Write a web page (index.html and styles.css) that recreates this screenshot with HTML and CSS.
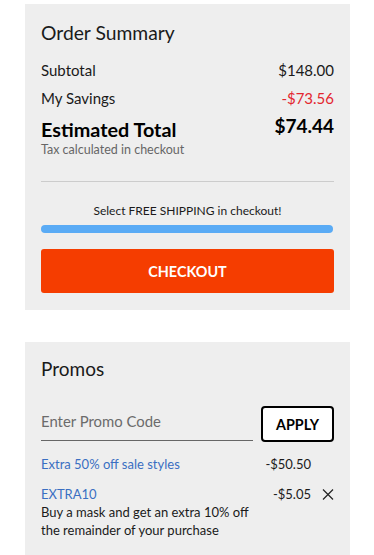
FILE: index.html
```html
<!DOCTYPE html>
<html>
<head>
<meta charset="utf-8">
<link rel="stylesheet" href="styles.css">
</head>
<body>
<div class="page">
  <section class="card summary">
    <h2 class="title">Order Summary</h2>
    <div class="row sub"><span>Subtotal</span><span>$148.00</span></div>
    <div class="row sav"><span>My Savings</span><span class="red">-$73.56</span></div>
    <div class="row total"><span>Estimated Total</span><span>$74.44</span></div>
    <div class="tax">Tax calculated in checkout</div>
    <hr class="divider">
    <div class="ship">Select FREE SHIPPING in checkout!</div>
    <div class="bar"></div>
    <button class="checkout">CHECKOUT</button>
  </section>
  <section class="card promos">
    <h2 class="title ptitle">Promos</h2>
    <div class="promo-form">
      <input class="code" type="text" placeholder="Enter Promo Code">
      <button class="apply">APPLY</button>
    </div>
    <div class="promo p1">
      <span class="pname">Extra 50% off sale styles</span>
      <span class="pamt">-$50.50</span>
      <span class="px"></span>
    </div>
    <div class="promo p2">
      <div class="pinfo">
        <span class="pname">EXTRA10</span>
        <span class="pdesc">Buy a mask and get an extra 10% off the remainder of your purchase</span>
      </div>
      <span class="pamt">-$5.05</span>
      <span class="px">
        <svg width="12" height="11" viewBox="0 0 12 11"><path d="M1 0.5 L11 10.5 M11 0.5 L1 10.5" stroke="#222" stroke-width="1.2" fill="none"/></svg>
      </span>
    </div>
  </section>
</div>
</body>
</html>
```

FILE: styles.css
```css
* { box-sizing: border-box; }
body {
  margin: 0;
  background: #fff;
  font-family: "Lato", "Open Sans", sans-serif;
  color: #1a1a1a;
}
.page {
  padding: 4px 24px 0 25px;
  display: flex;
  flex-direction: column;
  gap: 32px;
}
.card {
  background: #eeeeee;
  padding: 0 16px;
}
.title {
  margin: 0;
  font-weight: 400;
  font-size: 19.3px;
  line-height: 24px;
  padding-top: 17px;
  color: #1a1a1a;
}
.row {
  display: flex;
  justify-content: space-between;
  font-size: 15px;
  line-height: 18px;
}
.sub { margin-top: 16px; }
.sav { margin-top: 10px; }
.red { color: #e3262f; }
.total {
  margin-top: 11px;
  font-weight: 700;
  font-size: 19.8px;
  line-height: 22px;
  color: #000;
}
.total span:last-child { margin-top: -3px; font-size: 19px; }
.tax {
  font-size: 12.5px;
  line-height: 16px;
  color: #666;
  margin-top: 2px;
}
.divider {
  border: 0;
  border-top: 1px solid #cccccc;
  margin: 23px 0 0;
}
.ship {
  text-align: center;
  font-size: 12px;
  line-height: 16px;
  margin-top: 21px;
  color: #1a1a1a;
}
.bar {
  margin-top: 6px;
  height: 8px;
  border-radius: 4px;
  background: #5aabf5;
  margin-right: 1px;
}
.checkout {
  display: block;
  width: 100%;
  margin: 16px 0 17px;
  height: 44px;
  border: 0;
  border-radius: 3px;
  background: #f53d00;
  color: #fff;
  font-family: inherit;
  font-weight: 700;
  font-size: 14.4px;
}
.promos { padding-bottom: 20px; }
.ptitle { padding-top: 15px; font-size: 19px; }
.promo-form {
  display: flex;
  align-items: flex-end;
  gap: 8px;
  margin-top: 25px;
}
.code {
  flex: 0 0 212px;
  height: 34px;
  border: 0;
  border-bottom: 1px solid #666;
  background: transparent;
  font-family: inherit;
  font-size: 14.9px;
  padding: 0 0 6px;
  color: #1a1a1a;
  outline: none;
}
.code::placeholder { color: #6b6b6b; }
.apply {
  margin-left: auto;
  width: 73px;
  height: 36px;
  border: 2px solid #000;
  border-radius: 4px;
  background: #fff;
  font-family: inherit;
  font-weight: 700;
  font-size: 14.3px;
  color: #000;
  margin-bottom: -1px;
}
.promo {
  display: flex;
  align-items: flex-start;
  font-size: 13px;
  line-height: 18px;
}
.p1 { margin-top: 14px; }
.p2 { margin-top: 12px; }
.pname { color: #3a6fc2; }
.p1 .pname { flex: 1; }
.pinfo { flex: 1; display: flex; flex-direction: column; padding-right: 8px; }
.pdesc { color: #1a1a1a; }
.pamt { color: #1a1a1a; }
.px { width: 23px; display: flex; justify-content: flex-end; padding-top: 4px; }
```
